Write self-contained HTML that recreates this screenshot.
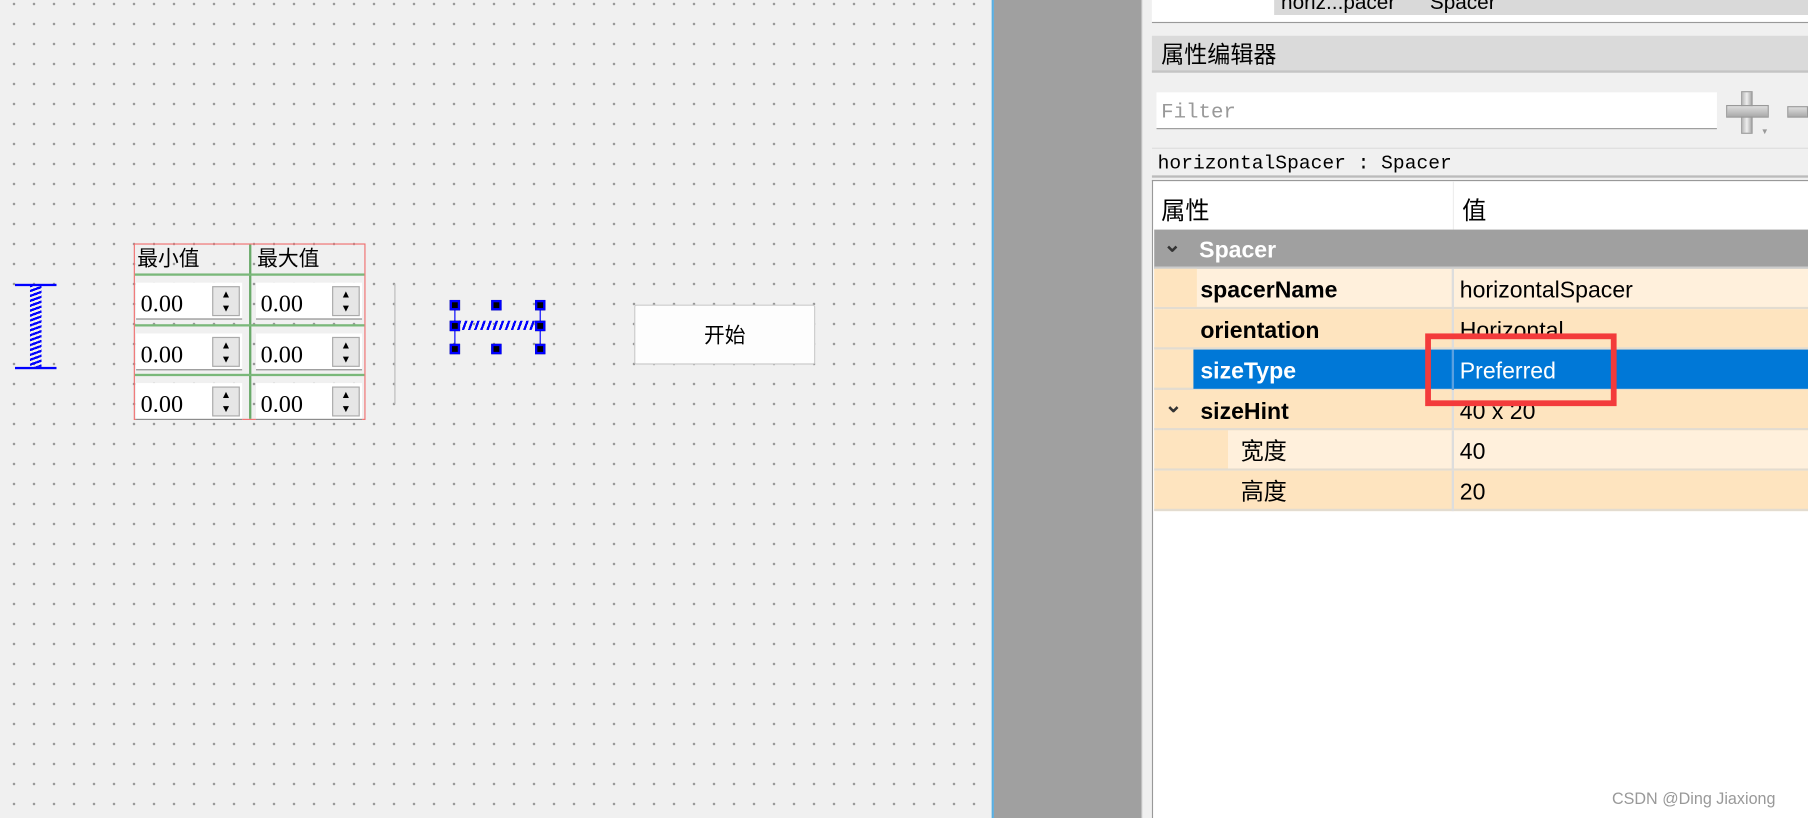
<!DOCTYPE html>
<html><head><meta charset="utf-8"><style>
*{margin:0;padding:0;box-sizing:border-box}
body{width:1808px;height:818px;overflow:hidden;background:#f0f0f0;position:relative;font-family:"Liberation Sans","Noto Sans CJK SC",sans-serif}
#dots2{position:absolute;left:0;top:0;width:992px;height:818px;
background-image:radial-gradient(circle at 14px 4px,#999 0,#999 1.2px,transparent 1.4px);background-size:20px 20px}
#w{position:absolute;left:0;top:0;width:1568px;height:709px;transform-origin:0 0;transform:scale(1.153061,1.153738)}
.a{position:absolute}
.cj{font-family:"Liberation Sans","Noto Sans CJK SC",sans-serif}
.spin{position:absolute;width:92px;height:32px;background:#fff;border-bottom:1px solid #888;font-family:"Liberation Serif","Noto Serif CJK SC",serif;font-size:21px;line-height:36px;padding-left:4px}
.spin .b{position:absolute;right:2px;top:3px;width:24px;height:26px;border:1px solid #aaa;background:#e6e6e6;font-size:9px;line-height:12px;text-align:center}
.row{position:absolute;left:1001px;width:567px;height:35px;font-size:20px;line-height:38px;border-bottom:2px solid #e3dcd0}
.row .k{position:absolute;left:40px;font-weight:bold}
.row .v{position:absolute;left:265px}
.row .d{position:absolute;left:258px;top:0;width:2px;height:35px;background:#ddd}
.h{position:absolute;width:9px;height:9px;background:#000;border:2px solid #00f}
.chev{position:absolute;font-size:18px;font-weight:bold;color:#333}
</style></head><body>
<div id="dots2"></div>
<div id="w">
<div class="a" style="left:13px;top:246px;width:36px;height:1.5px;background:#00f"></div>
<div class="a" style="left:13px;top:318px;width:36px;height:1.5px;background:#00f"></div>
<div class="a" style="left:26px;top:247px;width:10px;height:71px;background:repeating-linear-gradient(160deg,#00f 0 2px,transparent 2px 4px)"></div>
<div class="a" style="left:116px;top:211px;width:201px;height:153px;border:1px solid #f07070"></div>
<div class="a cj" style="left:119px;top:211px;font-size:18px;line-height:26px">最小值</div>
<div class="a cj" style="left:223px;top:211px;font-size:18px;line-height:26px">最大值</div>
<div class="a" style="left:216px;top:212px;width:2px;height:151px;background:#6aaa6a"></div>
<div class="a" style="left:117px;top:237px;width:199px;height:2px;background:#7ab87a"></div>
<div class="a" style="left:117px;top:281px;width:199px;height:2px;background:#7ab87a"></div>
<div class="a" style="left:117px;top:324px;width:199px;height:2px;background:#7ab87a"></div>
<div class="spin" style="left:118px;top:245px">0.00<div class="b">▲<br>▼</div></div>
<div class="spin" style="left:222px;top:245px">0.00<div class="b">▲<br>▼</div></div>
<div class="spin" style="left:118px;top:289px">0.00<div class="b">▲<br>▼</div></div>
<div class="spin" style="left:222px;top:289px">0.00<div class="b">▲<br>▼</div></div>
<div class="spin" style="left:118px;top:332px">0.00<div class="b">▲<br>▼</div></div>
<div class="spin" style="left:222px;top:332px">0.00<div class="b">▲<br>▼</div></div>
<div class="a" style="left:342px;top:246px;width:1px;height:104px;background:#bbb"></div>
<div class="a" style="left:394px;top:264px;width:1px;height:40px;background:#00f"></div>
<div class="a" style="left:468px;top:264px;width:1px;height:40px;background:#00f"></div>
<div class="a" style="left:398px;top:278px;width:68px;height:8px;background:repeating-linear-gradient(110deg,#00f 0 2px,transparent 2px 5px)"></div>
<div class="h" style="left:390px;top:260px"></div><div class="h" style="left:426px;top:260px"></div><div class="h" style="left:464px;top:260px"></div>
<div class="h" style="left:390px;top:278px"></div><div class="h" style="left:464px;top:278px"></div>
<div class="h" style="left:390px;top:298px"></div><div class="h" style="left:426px;top:298px"></div><div class="h" style="left:464px;top:298px"></div>
<div class="a cj" style="left:550px;top:264px;width:157px;height:52px;background:#fdfdfd;border:1px solid #ccc;border-radius:2px;text-align:center;line-height:52px;font-size:18px">开始</div>
<div class="a" style="left:860px;top:0;width:2px;height:709px;background:#5aaee0"></div>
<div class="a" style="left:862px;top:0;width:128px;height:709px;background:#a0a0a0"></div>
<div class="a" style="left:990px;top:0;width:9px;height:709px;background:#f0f0f0;border-left:1px solid #ddd"></div>
<div class="a" style="left:999px;top:0;width:569px;height:709px;background:#f0f0f0"></div>
<div class="a" style="left:999px;top:0;width:569px;height:20px;background:#fff;border-bottom:1px solid #999"></div>
<div class="a" style="left:1105px;top:0;width:463px;height:13px;background:#d9d9d9;overflow:hidden;font-size:18px;line-height:4px"><span style="margin-left:6px">horiz...pacer</span><span style="margin-left:30px">Spacer</span></div>
<div class="a cj" style="left:999px;top:31px;width:569px;height:32px;background:#dadada;border-bottom:2px solid #c4c4c4;font-size:20px;line-height:34px;padding-left:8px">属性编辑器</div>
<div class="a" style="left:1003px;top:80px;width:486px;height:32px;background:#fff;border-bottom:1px solid #999;font-family:'Liberation Mono',monospace;color:#999;font-size:18px;line-height:36px;padding-left:4px">Filter</div>
<div class="a" style="left:1510px;top:79px;width:10px;height:37px;background:linear-gradient(90deg,#bbb,#eee,#aaa);border:1px solid #999"></div>
<div class="a" style="left:1497px;top:91px;width:37px;height:11px;background:linear-gradient(#ddd,#aaa);border:1px solid #999"></div>
<div class="a" style="left:1550px;top:92px;width:18px;height:10px;background:linear-gradient(#ddd,#aaa);border:1px solid #999"></div>
<div class="a" style="left:1527px;top:111px;font-size:7px;color:#999">▼</div>
<div class="a" style="left:999px;top:128px;width:569px;height:26px;background:#f0f0f0;border-top:1px solid #ddd;border-bottom:2px solid #bbb;font-family:'Liberation Mono',monospace;font-size:17px;line-height:28px;padding-left:5px">horizontalSpacer : Spacer</div>
<div class="a" style="left:999px;top:156px;width:569px;height:553px;background:#fff;border-left:1px solid #999;border-top:1px solid #999"></div>
<div class="a cj" style="left:1007px;top:167px;font-size:21px">属性</div>
<div class="a cj" style="left:1268px;top:167px;font-size:21px">值</div>
<div class="a" style="left:1260px;top:157px;width:1px;height:42px;background:#eee"></div>
<div class="a" style="left:1001px;top:199px;width:567px;height:34px;background:#a0a0a0;border-bottom:2px solid #ccc"></div>
<div class="chev" style="left:1009px;top:202px">⌄</div>
<div class="a" style="left:1040px;top:199px;color:#fff;font-weight:bold;font-size:20px;line-height:36px">Spacer</div>
<div class="row" style="top:233px;background:#fff0dc"><div class="a" style="left:0;top:0;width:37px;height:33px;background:#fee4bf"></div><span class="k">spacerName</span><div class="d"></div><span class="v">horizontalSpacer</span></div>
<div class="row" style="top:268px;background:#fee4bf"><span class="k">orientation</span><div class="d"></div><span class="v">Horizontal</span></div>
<div class="row" style="top:303px;background:#fee4bf"><div class="a" style="left:34px;top:0;width:533px;height:34px;background:#0078d7"></div><span class="k" style="color:#fff">sizeType</span><div class="d" style="background:#5aa0e0"></div><span class="v" style="color:#fff">Preferred</span></div>
<div class="row" style="top:338px;background:#fee4bf"><span class="chev" style="left:9px;top:-6px">⌄</span><span class="k">sizeHint</span><div class="d"></div><span class="v">40 x 20</span></div>
<div class="row cj" style="top:373px;background:#fee4bf"><div class="a" style="left:64px;top:0;width:503px;height:33px;background:#fff0dc"></div><span class="a" style="left:75px">宽度</span><div class="d"></div><span class="v">40</span></div>
<div class="row cj" style="top:408px;background:#fee4bf"><span class="a" style="left:75px">高度</span><div class="d"></div><span class="v">20</span></div>
<div class="a" style="left:1236px;top:289px;width:166px;height:63px;border:5px solid #f33b3b"></div>
<div class="a" style="left:1398px;top:684px;font-size:14px;color:#999">CSDN @Ding Jiaxiong</div>
</div>
</body></html>
